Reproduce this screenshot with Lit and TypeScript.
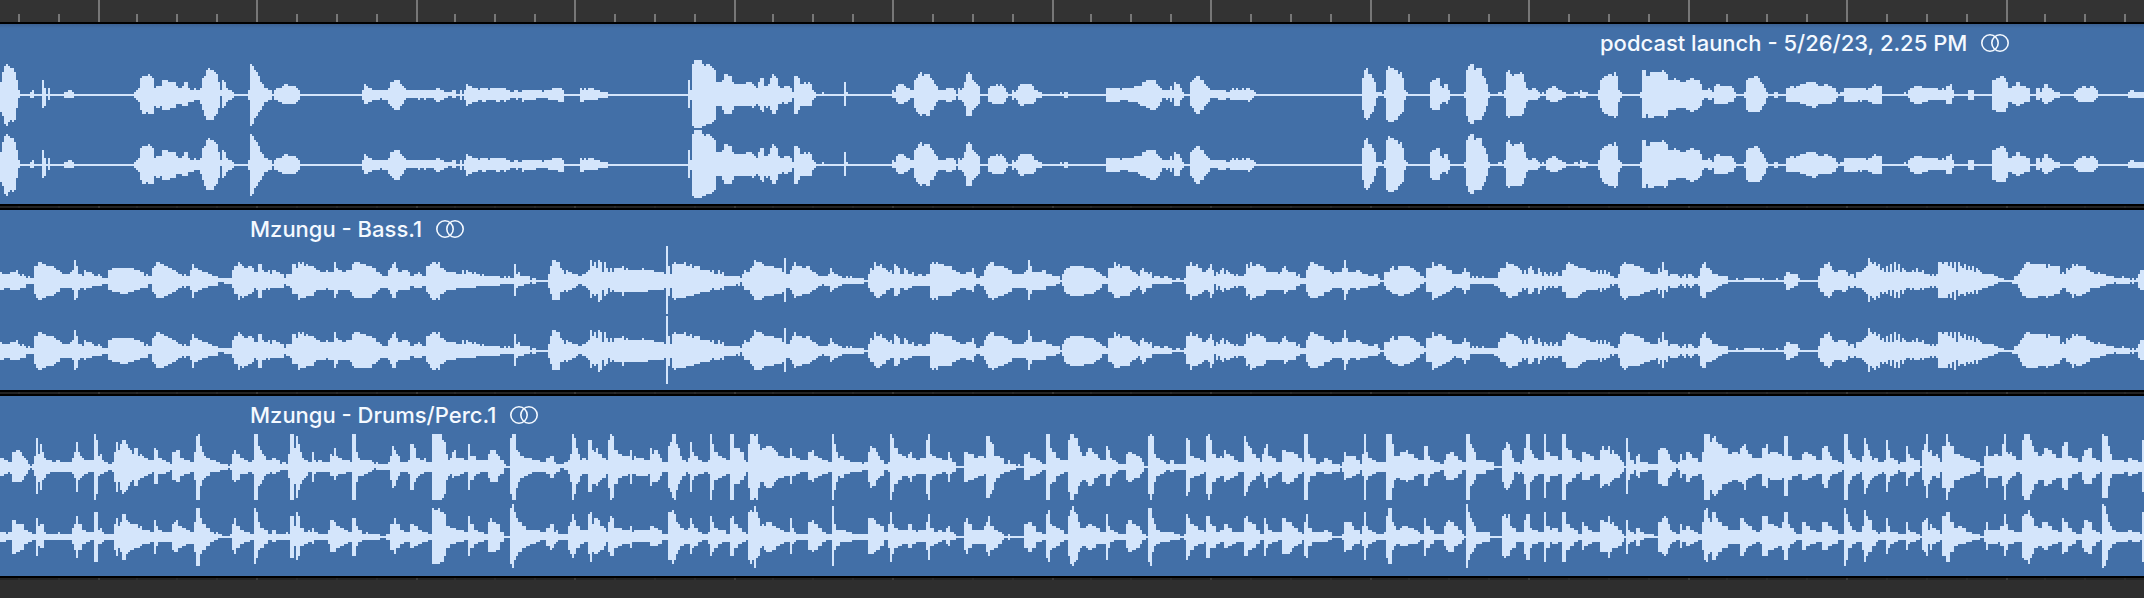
import { LitElement, html, svg, css } from "lit";
import { customElement, property } from "lit/decorators.js";

/** Timeline length at 1:1 zoom, in pixels. */
const TIMELINE = 2144;
/** Each envelope is stored in sections; a section covers this many peak columns. */
const SECTION_COLUMNS = 268;
/** Time units inside one section. */
const SECTION_UNITS = 1568;
const COLUMNS = TIMELINE / 2;
const LANE_ROWS = 35;
const MID = 17;

/*
 * Peak envelopes. An entry is time:above/below (below may be left out when both
 * sides are alike). A value holds until the next entry.
 */
const PODCAST = [
  `0:6/8 6:11/10 12:14 18:15 24:14/13 30:13/12 35:13 41:11/12 47:7/6 53:2/1 59:0 88:1 94:2/1 100:0 123:7/6
   129:3/5 135:0 140:3/2 146:0 187:1 199:2/1 211:1 217:0 393:1 399:2 404:3 410:8/7 416:9 428:9/8 434:10/9 440:9 445:8/9
   451:3/5 456:4/6 468:4/5 474:7 492:6/7 498:6 515:4/4 521:3/4 532:4/5 538:6/5 550:3 556:2/3 568:3/2 574:2
   586:3/4 591:8/7 597:9/10 603:12 609:13/12 615:12 627:11/10 633:10/9 638:6 644:2/0 649:7/6 655:6/5 661:3
   667:2 679:1 685:0 726:2 731:15 737:14/14 743:12/11 749:11/10 755:9/8 761:6/7 766:5/5 772:3 784:2 796:0
   802:2 808:3/2 814:3 825:4 831:5/4 843:4 866:3 872:2 878:0 1060:2 1065:5/4 1071:4 1077:3 1089:2 1112:2/1
   1118:2 1136:3/4 1142:6/5 1148:6 1154:7 1170:5 1176:4 1182:3/2 1188:2/1 1223:2 1229:2/1 1241:2 1247:2/1
   1270:2 1276:3 1287:2 1299:1 1311:1/0 1323:2/1 1334:0 1346:2 1352:0 1358:2 1364:5 1370:4 1381:3 1399:2 1405:3/2
   1411:3 1422:3/2 1428:2 1434:3/2 1452:3 1463:3/2 1475:3 1481:2 1492:1 1504:2/1 1510:2 1516:1 1527:2/3 1533:2`,
  `0:2/1 18:1 24:2/1 36:2 48:3/2 65:3 76:2/3 82:0 129:3 135:2/3 141:3/2 147:2 153:3/2 170:2 182:2/1 187:1 211:0
   445:7/6 451:2 457:15 462:17/16 486:15 492:14/15 498:15/14 509:14 515:13 521:12/12 527:6/5 544:7 550:10/9 562:9 574:6/7 579:5
   609:5 615:6/5 632:5/6 638:4/5 644:3/4 649:6/5 655:8/7 661:8 667:4/5 673:4/6 679:5 685:8/7 690:10/9 696:9 702:8/7
   708:4 714:3/4 720:3 726:4 737:4/3 743:3 749:1/1 755:9 767:8/7 772:5 784:6/5 790:5 796:6/5 802:5 807:2 813:1 819:0 837:1/0
   843:0 902:6/5 908:1/0 913:0 1041:2/1 1047:1 1053:4/3 1059:5/4 1076:4/3 1082:3 1088:3/2 1094:2/1 1106:7/6 1112:8 1117:10/9 1123:11/10
   1129:9 1135:10/9 1141:10 1152:8/7 1158:7 1164:5 1170:4/3 1176:2 1199:3/3 1217:3/2 1223:2 1229:0 1235:3/2 1241:2 1247:3 1253:6/5 1258:10
   1264:11/10 1270:10 1276:7 1282:6 1288:5 1293:4/4 1299:0 1323:3 1329:4/3 1335:4 1346:5/4 1352:4 1358:5/4 1364:4/4 1370:3 1376:1 1381:0
   1393:2/2 1399:1 1405:2 1411:4/4 1417:5 1428:5/4 1452:4/4 1458:2/3 1464:2/1 1470:1 1481:0 1534:1/0 1540:0 1546:1 1557:0`,
  `0:0 100:3 141:2/2 147:3/2 164:3 182:4/3 194:4 200:4/5 206:6/5 217:7/6 229:7 246:5/6 252:4/5 258:3 264:2/1 276:2/2 282:2/1 288:4/3
   294:2/1 299:6/5 305:5 316:3/2 322:1 328:0 346:6/5 352:7/6 358:8 364:9 375:7 387:5/5 393:4 399:3 404:2/1 428:2 452:1 463:2 469:3/2 475:2 481:3/2
   487:2 492:2 498:3/2 504:2 510:3/2 516:3 522:2 528:2/1 534:1/0 539:0 849:8/7 855:12/11 861:13/12 867:10/11 873:10/9 879:8/8 885:6/5 890:1 896:1/0 908:0 914:2/1
   920:12 926:14/13 932:13 943:12 955:10 961:11/9 967:8 972:2 978:1/0 984:0 1048:6 1053:7 1065:8/7 1077:4 1083:3 1089:5/3 1095:5/4 1101:2 1106:0 1147:1
   1153:12/10 1159:14/13 1165:15/14 1177:12 1182:13/12 1200:9/10 1206:8 1212:5/5 1218:1 1224:0 1247:1/0 1259:0 1265:2/1 1271:11/10 1276:12/11 1282:10 1288:9/10 1294:10
   1312:11/10 1318:10/9 1324:6 1330:3 1335:2 1347:3/2 1353:3/2 1359:2 1365:1 1370:0 1376:1/0 1382:0 1388:2 1394:3/2 1400:3 1405:4/3 1417:3 1423:2 1435:1 1447:0 1470:1/0
   1482:0 1487:2/1 1493:1 1505:1/0 1511:0 1540:2 1546:7/6 1552:8 1558:9`,
  `0:10/10 12:9/10 18:11 24:9/10 29:2/3 35:1 41:0 94:1 99:12/11 111:9 117:9/11 123:11 135:11/10 158:12/10 164:11 170:10 176:7/7 188:7 194:8/7 200:7/6 211:6 229:7 241:8 253:7
   264:7/6 270:5/5 276:2 281:2/1 293:3/2 299:2 305:1 310:4 316:5/4 328:4 352:4/3 363:3 369:1 375:0 399:1 404:7 410:8 428:9/8 439:8 445:6/7 451:5 457:3/4 463:1 468:0
   486:1 498:0 521:3 533:4/3 545:3 551:4/3 562:5/4 580:6/5 597:6 609:5/5 615:4 632:5/4 644:4/4 656:3 667:1 673:0 679:1/0 690:3 732:3/2 738:3 744:3/2 756:2 762:3 773:4 779:5/4 785:4
   802:0 867:1/0 873:0 879:2/1 885:3 896:4 920:3 937:3/2 960:3/2 966:2 978:3/2 984:2 990:4/4 1001:5/4 1007:2/1 1013:0 1054:2 1071:0 1124:7 1136:8 1148:9/8 1159:8 1165:6 1170:3 1182:4 1194:6/5
   1206:4/4 1218:4/3 1223:3 1235:0 1253:3/2 1265:1 1271:3 1277:5/4 1289:3 1300:2 1306:1 1312:1 1323:0 1364:1 1370:2 1376:3 1388:4/3 1400:3 1411:4/3 1423:3/2 1429:2/1 1435:0 1522:1 1528:2/1 1540:1`,
];

const BASS = [
  `0:4 6:3/4 12:3 29:4 47:5/4 53:3/4 59:2/3 65:3/3 70:2/3 76:1 82:2/1 88:1 100:7/6 106:7/8 111:9 123:8 135:7/7 147:7 158:6/6 164:5 176:4/3 182:3 205:4/3 211:5/4 217:10/9 222:7/8 228:3/4 234:3 240:2/3 246:5/4 252:4/3
   263:4/3 269:3/2 275:2 287:3/2 293:2/2 298:1 316:5/4 328:6/5 352:6 375:6/5 393:5/4 410:4/3 422:2/3 428:3 434:2/1 445:6/5 451:7/6 457:9/8 468:8/8 480:7/7 492:6/6 504:5/5 515:4 521:3/3 532:2/2 538:3 544:2 556:5/4 562:8 568:6/5 580:5/4 591:4/3 609:3/2 621:2/2
   638:1/0 644:1/0 656:1 679:5/3 685:7/6 697:9 703:8/7 709:7/8 715:6/7 726:7/6 738:6/5 744:4/3 750:4 755:8 767:5/4 773:4 779:4/3 785:5/4 791:3 797:5/3 808:4/3 820:3/3 832:1 838:3/2 850:3 855:8/6 867:6 873:9 879:8 885:9/8 890:7/8 896:8/7 902:7 920:6/5 926:5/4 937:4
   955:5/3 961:4 978:9/8 984:6 990:5/4 1002:4/4 1014:5/4 1025:5 1031:8/7 1037:9/8 1054:8 1072:7/8 1089:6/6 1101:4/5 1107:4/4 1113:3 1119:2/3 1136:5/4 1142:6 1148:8 1154:9/8 1160:6/5 1165:4 1177:5/4 1195:4 1201:2/2 1212:3 1224:4/3 1230:3 1236:2/2 1247:7/5 1253:7/6 1259:8
   1265:9 1276:8 1282:9 1288:6/6 1300:5/5 1306:4/4 1335:3/3 1352:5/3 1358:3 1364:5/3 1370:4/3 1376:4/3 1381:3 1387:4/3 1393:3/2 1399:3/2 1405:2 1411:3/2 1417:2 1463:1 1475:2/1 1481:1 1487:2/1 1493:1 1504:8/7 1510:3/3 1516:4/2 1522:2/2 1533:2/1 1550:0 1556:1`,
  `0:0 36:3 42:7/6 47:10/9 59:9 70:6/5 76:5/5 82:3/4 88:5 94:4/4 106:3/3 117:3/2 123:2/1 135:3/2 147:4/3 153:5/4 159:10/8 165:7/6 170:9/7 176:6 182:10 188:9 194:4 200:9/7 206:6 212:4/3 217:6/5 223:4 229:6/5 252:7 258:5 264:6/5 270:5 311:6/5 317:5
   328:5/4 340:5/4 346:4 375:3 381:17/16 387:7/7 393:3 399:8 405:9 411:8 434:9/8 440:7 452:8/7 458:6/7 463:7/6 481:5/5 510:4/4 516:5/3 522:3/4 534:5/4 540:3 545:4/4 551:2/2 587:2/1 592:2 598:1/0 604:3/2 610:5/4 616:4 627:6/6 633:7/7 638:10/9 644:9 662:8/8 668:7/7 697:6/6 720:4/5 726:11/10
   732:3 744:5/4 750:7/6 756:9/8 762:7 779:6/6 791:7/6 803:5/5 809:4 821:3/3 826:2/2 838:2/1 844:2 856:3/2 861:6/5 867:4/4 873:3/3 885:2/2 896:1/1 908:2/1 914:1 920:2/1 926:1 961:0 973:3/3 978:6/5 984:5 990:9/7 996:7/8 1008:8/7 1013:6/6 1025:5/4 1031:4 1037:5/3 1043:3 1048:8/7 1054:7 1060:6
   1066:3 1078:6/4 1084:5/4 1089:3 1101:4/2 1107:2 1119:3/2 1131:2 1142:3/2 1154:8 1160:9 1166:8/8 1172:9 1177:8/7 1195:7 1218:5/5 1230:4/4 1242:3 1259:4 1277:6/5 1283:3/2 1289:1 1300:2 1312:5/4 1318:7/6 1324:8/8 1329:9/8 1335:9 1341:7/8 1353:7/7 1370:6 1382:5/5 1394:3/3 1417:3 1429:4/3
   1435:5/4 1441:10/9 1447:7/6 1452:4 1464:4 1482:5/4 1493:3/2 1505:3/2 1511:2 1523:2/1 1534:0 1540:3/2 1546:5 1552:6 1558:6/6 1563:7`,
  `0:7 35:6/6 65:5/5 70:4 82:3/3 88:2/1 100:1 106:6/5 118:6 124:9/8 130:7/8 136:8 141:6/7 147:7 170:5/5 176:4/4 188:3 194:2 200:5/4 206:6/6 212:4/5 218:4/3 223:3 229:4/3 235:1 241:2/1 253:2/1 258:1 270:2/1 282:1/1 293:0 305:1/0 317:0 329:1/1 334:7/6 346:9 352:7/7 364:8/7 370:6 382:4/5 387:4
   393:5/4 399:6/5 405:8 411:5/6 417:2/1 423:4 429:3/2 435:5/4 440:6/5 446:3 452:5/4 458:4 463:3 475:2/2 481:3 487:2 504:3 510:8/7 516:6 522:9 528:7/8 540:8/7 552:7 563:6 569:4 604:3/4 610:4 616:6/4 622:7/6 628:5/5 634:4 657:2/2 663:3/2 669:1 687:5 693:7/7 698:9/8 710:8/8 722:7/7 740:5/5 757:4/4
   763:3 769:4/3 792:6/4 798:10/9 804:6 810:4 816:4/3 828:5/4 840:4/3 851:3/3 863:2/2 869:2 881:3/2 893:1 902:0 914:4/2 920:4 931:6/5 937:7/6 943:5/6 955:7 972:7/6 990:6/5 1002:5/4 1008:4/3 1020:2/1 1031:1/0 1037:6/5 1054:9 1060:7/8 1072:8/7 1084:7/6 1095:5/5 1107:5/4 1113:3 1119:3/2 1125:3 1142:4/4
   1148:6 1154:4/4 1166:1 1172:2/1 1178:1 1184:2/1 1189:1 1201:2/1 1207:1 1236:1/2 1248:4/3 1253:6/5 1271:9/7 1277:8/8 1289:8/7 1294:7 1306:6/5 1312:5 1318:3 1324:5/4 1330:3 1335:6 1341:7/6 1347:5 1353:3 1365:6 1371:4 1377:2/2 1382:4 1388:3 1394:2 1400:4/3 1406:2 1412:3 1417:4/3 1423:2 1433:5/5 1445:8 1452:9/8 1458:8 1470:7/8 1482:6/7 1487:6 1493:6/5
   1505:5/4 1517:4 1534:5/4 1540:3 1546:5 1552:3 1557:5/4 1563:3`,
  `0:4/3 6:2/1 12:2 18:1 29:3 35:7/7 41:8 47:9 53:8/8 59:8/7 76:7/7 94:6 105:4/5 123:3/4 141:3 147:6 153:4/4 158:9/8 164:5/4 170:5 176:2/2 182:3 205:2/2 211:1 217:2/2 223:3 229:1 235:3/2 241:3 247:2 253:1 264:2 270:6/7 276:8 282:9/8 288:6/5 294:6/5 299:5 305:3/4 317:3 323:2/2 334:2/1 352:0 375:1/0
   381:0 399:1/0 446:0 451:1/0 457:0 492:1/0 498:0 515:2/1 521:4 533:3/3 545:3/2 556:1/0 562:0 615:2/3 621:6/5 633:8/7 645:9/8 650:7/7 656:5/5 662:4/4 674:5/4 685:5 697:4 703:2 709:3 721:1/2 727:4/3 744:5/4 750:6/5 756:7/6 762:11/10 768:9/7 774:8 780:9 786:7 791:8 797:5 803:6/6 809:4/5 815:7/6 821:4 827:8/7 833:4 838:9/8
   844:5 850:8 856:4 862:6 868:5/4 874:4/3 885:4 891:5/3 897:4 903:6/4 909:4/4 915:4/3 921:5/4 926:3 938:3/3 944:2 950:3 956:2 961:3 966:9/8 978:8 984:9/8 996:7/6 1001:9/8 1007:6/5 1013:9 1019:4 1025:9/7 1031:7/6 1037:6 1043:8/7 1048:5 1054:7/6 1060:5 1066:7/6 1072:4/4 1078:6 1084:5/4 1089:4/4 1095:3/3 1113:3/2 1130:2/1 1142:1/0 1158:0 1182:0/1
   1188:2/1 1200:3/3 1206:5 1212:6/7 1218:8/7 1224:9/8 1235:8 1258:8/7 1282:6/8 1288:8/7 1294:7 1305:7/6 1323:3/4 1329:4/3 1335:3 1341:6/5 1347:5 1353:6 1358:8 1364:7/6 1370:8/7 1376:7 1388:7/6 1400:5/5 1411:4/3 1423:3/3 1435:4/3 1441:3/2 1458:2/1 1481:1/0 1487:1 1505:2/1 1510:1 1528:0 1534:1 1540:0 1546:1/0 1551:3 1557:5/4`,
];

const DRUMS_LEFT = [
  `0:4 12:3/3 24:2 30:2/3 35:7 47:8/7 59:7 65:5/6 70:4/4 76:3 82:1 88:0 94:1 100:5/4 106:14/13 112:6/7 117:11 123:7/6 129:4/5 135:3/3 147:3/2 153:2/2 164:3/2 176:2 211:4/3 217:7/5 222:12 228:7/6 234:5 240:4 246:3/3 258:3/2 275:16 281:13 287:5/4 293:6/3 299:3 305:2/2 316:1 328:2 334:7 340:12 346:8/7 352:11 357:13 363:13/12 369:11 375:9 381:8/7 387:6
   393:9 405:5/6 410:6/5 416:5/5 422:4 433:3/3 445:3/2 451:9/8 457:8 463:4/3 475:3 486:2 498:1/1 504:7/6 515:8/7 527:4 538:3/3 556:2 568:7/6 574:15/16 580:16 585:10/9 591:7/6 597:5 603:4 615:3/2 632:2/2 644:1 667:0 674:1 679:6 685:8/7 691:6/6 703:4/3 715:3/3 726:2 732:2 738:3 744:16 755:10/9 761:8 767:6/6 773:5/4 779:3/3
   791:3/2 797:4/3 808:3/2 820:1 826:2/1 838:1 843:6/5 849:16 861:9/8 867:15 873:11 879:7/8 885:4/6 891:3/5 897:3/4 903:2 914:7 920:3/3 926:2 932:3/2 944:2 961:2/2 967:6/4 972:5/4 978:9/6 984:5/4 990:4/3 1002:3/3 1014:3/2 1025:2 1031:16 1042:7 1048:4 1054:3/4 1066:3/3 1078:3/2 1089:2/1 1095:1/0 1101:2/1 1107:1 1136:2/1 1142:5/6 1148:10 1154:8/9 1160:6 1166:5/4 1172:2/2 1195:3
   1201:11 1212:9/7 1218:4/5 1224:4/4 1230:3/3 1242:4/2 1247:2 1265:16 1294:13/15 1300:12/13 1306:6 1312:3/4 1318:4/3 1323:7/5 1329:8/4 1335:4 1346:4/3 1358:3/2 1370:11 1376:5/6 1387:5/4 1393:3/3 1405:3/2 1428:6/5 1434:8/7 1452:6/7 1457:5/4 1463:3 1475:1/0 1481:0 1493:14/13 1498:16 1510:8/10 1516:7/7 1522:5 1533:4/4 1545:4/3 1557:3/2`,
  `0:3/2 12:2 30:4/3 42:5 53:2/3 59:1/2 70:1/0 82:2/1 94:3 100:6/7 106:16 112:14/13 117:9/8 123:6/7 129:3/4 135:4/3 147:3 153:13/12 164:8/8 170:7/8 176:9 182:6/7 188:6 194:4/5 206:3/3 212:13/10 217:16 223:15 229:8 240:6/5 252:5/4 270:5/3 276:8 282:3 288:5/3 294:4/4 317:3/4 329:3 334:9 340:6/7 346:8/7 358:6 364:4 370:2 381:2/2 387:10 393:12 399:16/15 405:16 410:11 416:9/8 422:5/6 428:3/4
   440:2 446:4/3 452:12 457:7/6 463:5/4 475:3/3 487:2/3 493:2/2 505:3 510:16 516:11 522:7/6 534:5/5 545:4/4 557:3/3 563:3 569:16 580:9/8 586:9/8 598:7/6 609:3/4 615:2 621:11/10 627:16 639:15 645:16 650:11/10 656:8/7 662:9/7 668:9 674:10 691:9 697:8/7 703:7/6 709:5/5 727:4 744:9/8 750:5/4 762:4/3 773:3/2 791:3/2 797:7/6 809:8/7 815:5 827:4/4 838:3/3 856:2 867:16
   873:11 879:7 885:4/4 891:5 903:3/3 920:2/2 955:1/1 961:2/1 973:7 978:10/10 984:9 996:7/6 1002:5 1008:3/4 1020:1/1 1031:2 1037:16 1043:14/12 1049:9/8 1060:6/6 1072:5/4 1084:4 1090:6/5 1095:7 1101:4/4 1113:3/3 1125:4/3 1142:13/13 1148:16 1154:6 1160:5/4 1172:4/3 1189:3/2 1201:3 1207:7 1213:4/3 1219:2 1230:0 1254:7 1265:6/6 1283:4/5 1295:5/4 1312:4/3 1318:15 1329:12/13 1335:11 1341:5/7
   1347:5/5 1358:4/3 1370:1/2 1382:3/2 1388:1 1405:0/0 1411:1/0 1417:0 1429:6 1441:7/6 1447:4 1464:3/3 1475:2/2 1482:1 1493:16 1505:9/8 1511:7 1523:4/4 1534:3/3 1546:3/2 1557:13/12 1563:16`,
  `0:16 6:14/13 18:10/9 24:7/7 30:5/6 42:7 48:9 59:7/8 65:6/5 76:4/4 82:3/3 100:10/9 106:8/9 112:4/5 118:3/3 130:2/2 136:1 159:6 165:7 177:6 182:6/5 188:5 200:4/3 206:2/2 212:0 223:15/13 229:16 235:15/13 241:6/7 247:4/4 259:3/3 270:2/2 276:1 288:3/2 300:1/1 329:1 334:14 340:13/12 346:5 358:4/4 376:3/3 388:2 394:15/13 400:16 405:13 411:6/7 423:4/5 435:5/4 441:4 446:8/7 452:6/6 464:5/5 475:3/4 487:2
   504:15/14 510:12 516:10/9 522:9/7 528:6/6 540:4/4 551:2/2 557:6/3 563:9/7 569:11/10 575:5/5 587:4/4 598:2/3 604:2 614:8/7 628:7/8 640:7 652:6/5 664:4/3 673:2/2 680:16 691:6/7 697:4/4 715:1/2 727:2/2 739:4/3 750:3/3 762:1/2 785:0/0 791:2/2 797:7/6 803:5 821:5/4 833:3/3 845:1/1 850:6/4 856:16 862:7/6 868:4/4 880:3/3 892:2/2 910:2 916:13/10 920:16 937:11/10 943:5/6 949:5 961:7/6
   978:8/7 984:6 1002:4/4 1014:3/3 1025:3 1031:10/9 1043:5 1049:3/3 1060:2/2 1078:1/1 1090:3/4 1096:6 1108:7/6 1119:5/5 1131:3/3 1143:2/1 1154:16 1165:11/9 1171:9/8 1177:7/6 1183:3/3 1201:3/3 1212:2/1 1236:0/0 1259:8/7 1265:9/10 1271:12/11 1277:11/10 1283:8 1289:4/6 1295:2/2 1306:2/3 1312:1/2 1318:3 1324:9/8 1330:16 1341:8/7 1347:6/6 1353:4/4 1365:3/3 1382:16/15 1388:7 1400:5/4 1423:3/3
   1435:16 1447:9/8 1452:8/7 1464:4/5 1475:3/3 1487:2 1493:7/6 1505:6/6 1517:5/4 1529:3/3 1546:8/10 1552:10/9 1558:8`,
  `0:10/9 6:6/7 12:8/6 18:6/5 29:5/5 35:3/3 41:2 47:0 53:14/13 59:7/6 65:3/3 76:1/1 82:5/4 88:6/5 94:2/2 106:2 117:1/1 129:1 147:8 153:9/8 159:9 170:8/9 176:6/5 182:3/4 188:2 200:1/0 205:2/1 211:6/5 217:3 229:7 241:6/5 247:4/4 264:2/3 276:7/6 282:16 299:12/11 305:14/13 311:15/14 317:12/13 323:11 335:9/8 352:6/7 364:7/6 381:6/7 387:9/7 393:10/8 399:11 405:8/6 411:6/5 422:4/4 434:4/3 452:9
   463:11/10 469:6/5 475:7/6 498:6/6 510:5 516:15/14 527:5/6 539:3/4 557:3/3 569:6/6 574:7/6 586:6/5 598:5/4 610:3/3 627:9/8 633:10 645:7/6 651:5/4 657:3/3 674:2/2 685:1 691:16 703:8 709:6/6 715:4/4 726:3/3 738:2/2 744:5/6 750:14/13 756:11/10 762:8/8 768:5/6 774:3/5 780:4 791:2/3 803:2/2 809:3 814:13/12 820:8/7 826:4 838:3/3 850:1/1 856:2/2 873:10/9 879:6/5 885:4/4 896:3/2 914:0/0
   920:8/6 926:11/9 932:16/15 937:7/8 943:8/6 949:5/4 961:6/5 967:4/5 973:2 978:10 990:16 996:12 1002:10 1013:6 1031:5/5 1043:4/4 1060:3/3 1078:2/2 1089:0/0 1101:5/4 1107:10/10 1113:5/5 1124:5/5 1130:6/5 1142:5/4 1154:11/9 1160:16 1165:7/8 1171:6/6 1177:7/5 1183:5/4 1195:3/2 1206:3 1212:13/14 1218:16 1236:13 1241:10/11 1247:7/8 1259:5/6 1271:6 1277:9 1288:8 1300:6/6 1312:4/5 1329:10/10 1335:12/11
   1347:5/5 1358:4/3 1376:2/2 1388:5/6 1394:8/8 1405:9/8 1417:4/5 1429:3/3 1440:2 1446:16/15 1452:15 1464:10/9 1470:6/5 1476:3/3 1511:2/2 1523:4/4 1534:3/3 1551:2 1563:13/12`,
];

const DRUMS_RIGHT = [
  `0:2 18:1 24:2/1 35:8 47:6/7 59:6/6 70:3/3 82:2/2 94:1 106:9 112:5/4 117:6/5 129:2/1 135:1 170:2/1 176:1 211:4/3 217:6 222:10 228:6 240:3/3 252:2/2 263:2/1 275:12 287:3 293:4/3 299:2/2 305:1 334:6 340:9 346:5 352:7 358:11 369:8 375:7 381:6/6 393:6/5 405:4/5 410:5/4 416:3 428:3/3 439:2/2 451:8 457:5/4 463:3/2 475:2 504:6 510:7 515:8/7 521:5 533:4/4 544:3/3 556:2/3 568:7 574:14 585:9/8 591:6 603:4/4
   615:2/2 626:1/1 632:2/1 638:1/0 650:0 674:1/0 679:6 685:9/8 691:5 703:3/3 715:2/2 732:1 744:14/13 750:12/10 755:7/6 761:4/5 773:3/3 785:1/1 797:3/2 808:1 838:2/1 843:1 849:10 861:5/4 867:12/11 873:10/9 879:4/4 891:2/3 903:3/2 909:2 914:4/3 920:2/1 932:1 944:1 961:3 967:8/7 978:7/7 984:5/5 996:4/4 1008:3/3 1020:2/2 1031:9 1042:5/4 1048:3/2 1060:1/1 1072:2/1 1078:1 1113:0/0 1130:1 1142:6
   1154:9/8 1160:6/5 1172:3/3 1183:2/2 1201:6/5 1212:5/4 1224:3/3 1236:2/2 1253:1 1265:14/13 1271:13 1282:14/13 1288:12 1300:11/9 1306:5 1318:4/3 1335:3/2 1358:2/1 1370:10/9 1376:6/5 1387:3/3 1399:2/2 1417:1 1428:7 1434:9/7 1440:7 1452:6/6 1463:2/2 1475:0 1492:14/13 1498:16/15 1504:12/11 1510:9 1516:7/7 1527:5/5 1539:3/4 1551:3/3`,
  `0:3/2 12:2/1 30:4/4 42:6 48:6/5 53:2/3 59:3/2 65:1 94:5/6 100:7/8 106:11/10 112:8 117:5/5 129:3/3 141:3/2 147:3/2 153:11/8 159:12 165:6/7 170:9/8 182:8/7 188:5/6 200:4/4 206:2 212:7 217:10/9 223:9 229:4/5 241:4/4 252:3/3 276:5 282:2 288:3/2 311:3/2 334:5/4 346:4 358:3/3 370:1 387:12/11 399:13/13 405:11 410:7/8 416:6/6 422:4/4 434:3/3 446:4/3 452:9/8 457:6/5 463:4/4 475:2/2 487:1 505:2/3 510:10/9 516:7 522:4/5 534:3/3 545:3/2 557:1/2
   569:9 575:10/9 580:6/5 592:4/3 604:2/2 615:1 621:12/11 627:13 633:12/11 639:15 645:12/10 650:9 656:5 662:6/4 668:5/6 674:7 691:5/6 703:4/4 715:3/3 727:2 744:9/8 750:4/3 756:2 762:1 797:7/6 809:8/7 815:6/6 827:4/4 838:2/2 850:1 867:15/14 873:6/6 879:3/4 891:3/2 908:2/2 926:1 973:9/8 990:8/7 996:6/6 1008:5/4 1020:2/1 1031:6/5 1037:12 1043:6/8 1049:4/5 1060:3/4 1072:3/3 1090:6/5 1101:3/3
   1113:2/2 1119:3/2 1142:7/6 1148:11 1154:4/4 1166:2/3 1178:3/2 1189:2/1 1201:4/3 1207:5/4 1213:2/1 1225:1 1230:0 1254:7/6 1260:9/8 1265:6/5 1277:3/3 1312:5/3 1318:7/7 1324:10/9 1329:5/6 1341:3/5 1353:2/3 1364:1/1 1370:0 1382:1 1388:0 1429:6/5 1441:7/7 1452:5/5 1464:2/2 1482:1 1493:11/10 1499:13/12 1505:6/6 1511:5/5 1523:4/4 1534:3/2 1546:1 1557:10/9 1563:13`,
  `0:15/14 6:12 12:11 18:7/7 24:4/5 30:4/4 42:5/5 48:6/6 59:5 71:4/3 82:2/3 100:11 106:5/5 112:3/2 124:2/1 136:1 159:6/5 165:8/7 177:6 188:5/5 200:3/3 206:1 218:0 223:14/12 229:14 235:9/7 241:6/4 247:3/3 259:2/2 288:2/1 300:1 318:0 329:1/1 334:11 340:9 346:6/6 358:5/4 370:3/3 388:2 394:10 405:6/5 411:5/5 423:2/3 435:3/2 446:6/5 458:4/4 470:2/3 481:2/2 504:9 510:10/9 516:7/6 528:6/5 540:3/3 551:1
   563:9 569:6/5 575:3/3 587:2/2 598:2 604:2/1 614:9/8 628:7/8 640:7 646:5/5 652:4/4 664:2/3 673:1 680:7/9 685:11/10 691:4/4 703:2/2 727:2/2 739:3/2 750:2/1 762:0 791:1 797:7 803:7/6 821:5/4 827:3/3 845:1 850:5/4 856:12/11 862:5 868:3/3 880:2/2 892:1 910:2/1 916:7/6 920:10 926:14/13 937:7/6 943:5/4 949:3/3 961:4 967:5/4 985:4/3 1002:3/3 1014:2/2 1019:1 1031:9 1037:5/5 1049:3/3 1060:1/1
   1090:5/4 1096:7/6 1102:8/7 1108:7 1119:5/4 1131:3/3 1143:1/1 1148:0 1154:16/15 1160:12/11 1165:9/8 1171:7/7 1177:5 1183:2/3 1201:2/2 1212:2 1224:0 1259:10/9 1265:11/10 1271:9 1277:11/9 1283:5/6 1289:4/5 1301:2/2 1318:2 1324:8/8 1330:11 1341:4/5 1347:3/3 1365:2/2 1382:12 1388:5/5 1400:3/2 1406:4/3 1423:2/2 1435:12 1447:6/6 1458:4/4 1470:3/2 1482:1/1 1493:7/6 1499:5/4 1511:3/3 1523:2/2 1546:8/7 1558:7`,
  `0:10 6:6/7 12:7/5 18:5 29:3/4 41:1/2 47:0 53:8 59:3/3 65:2/2 76:1 82:4 94:2/1 106:1/0 135:0 147:7 159:9/8 165:10/9 170:9/8 176:6/5 182:3/3 188:2/2 200:1 211:6/5 217:3/2 229:5/4 241:3/3 253:2/2 264:1 276:7/6 282:13/11 288:14/12 293:9/8 299:7 305:12/11 317:9/9 323:7/7 335:5/5 352:3/3 387:9 399:7 405:6/5 411:5/4 422:3/3 434:2/2 446:3 452:10/9 469:6/6 486:5/5 498:4/4 510:7/6 516:12/11 527:6/5 533:4/3 545:2/2 551:1
   569:7/6 580:5/4 592:3/3 610:2/2 627:7/6 645:5/4 657:3/3 674:1/1 691:14 697:11 703:7/5 709:5 715:3/3 726:2/2 744:5/6 750:13/12 756:10/9 762:8/7 774:3/4 785:2/2 791:1 797:2/1 814:9/8 820:5/5 826:2/3 838:2/2 850:1 873:7/6 879:3/3 885:2/2 902:1 914:0 920:7/6 926:8/7 932:9 937:3 943:6 949:4/3 961:3/2 973:1 978:10/9 990:12 1002:7/7 1013:4/4 1025:5/3 1037:4/3 1049:2/2 1066:1/1 1078:1 1089:0 1101:3/2
   1107:7/6 1113:3/3 1142:3/2 1148:5/4 1160:11/9 1165:6/6 1171:3/3 1189:2/2 1206:2 1212:10 1218:11 1230:13 1236:10/10 1241:9/8 1247:5/5 1259:4/4 1271:7/5 1277:7/6 1288:5/4 1300:3/3 1317:2/2 1329:9/8 1335:7/7 1347:4/4 1358:2/3 1370:1 1388:4/5 1394:8/7 1405:7/8 1417:3/4 1429:2/2 1440:1 1446:16/15 1452:15/14 1458:11 1464:7/6 1470:5/5 1476:3/3 1487:2/2 1523:3/1 1534:2/2 1557:1 1563:12`,
];

function envelopePath(sections: string[]): string {
  const up = new Array<number>(COLUMNS).fill(0);
  const down = new Array<number>(COLUMNS).fill(0);
  sections.forEach((text, index) => {
    const peaks = text.trim().split(/\s+/).map((entry) => {
      const [time, level] = entry.split(":");
      const [above, below] = level.split("/").map(Number);
      return {
        column: Math.round((Number(time) / SECTION_UNITS) * SECTION_COLUMNS),
        above,
        below: below ?? above,
      };
    });
    peaks.forEach((peak, i) => {
      const end = peaks[i + 1]?.column ?? SECTION_COLUMNS;
      for (let c = peak.column; c < end; c++) {
        up[index * SECTION_COLUMNS + c] = peak.above;
        down[index * SECTION_COLUMNS + c] = peak.below;
      }
    });
  });
  let path = `M0 ${MID}`;
  for (let c = 0; c < COLUMNS; c++) path += `V${MID - up[c]}H${c + 1}`;
  for (let c = COLUMNS - 1; c >= 0; c--) path += `V${MID + 1 + down[c]}H${c}`;
  return path + "Z";
}

interface Region {
  name: string;
  labelAt: number;
  channels: string[][];
}

const REGIONS: Region[] = [
  { name: "podcast launch - 5/26/23, 2.25 PM", labelAt: 1600, channels: [PODCAST, PODCAST] },
  { name: "Mzungu - Bass.1", labelAt: 250, channels: [BASS, BASS] },
  { name: "Mzungu - Drums/Perc.1", labelAt: 250, channels: [DRUMS_LEFT, DRUMS_RIGHT] },
];

interface Tick {
  x: number;
  major: boolean;
}

const TICKS: Tick[] = Array.from({ length: 54 }, (_, i) => {
  const beat = i - 2;
  return { x: 2 * Math.floor((98 + beat * 39.75) / 2), major: beat % 4 === 0 };
});

@customElement("time-ruler")
class TimeRuler extends LitElement {
  static styles = css`
    :host {
      display: block;
      height: 22px;
      background: #333333;
    }
    .ticks {
      display: block;
      width: 100%;
      height: 100%;
    }
    .tick {
      fill: #777777;
    }
  `;

  render() {
    return html`<svg class="ticks" viewBox="0 0 ${TIMELINE} 22" preserveAspectRatio="none" shape-rendering="crispEdges" aria-hidden="true">
      ${TICKS.map((t) => svg`<rect class="tick" x=${t.x} y=${t.major ? 0 : 14} width="2" height=${t.major ? 22 : 8}></rect>`)}
    </svg>`;
  }
}

@customElement("grid-gap")
class GridGap extends LitElement {
  static styles = css`
    :host {
      display: block;
      height: 2px;
      background: #232323;
    }
    .ticks {
      display: block;
      width: 100%;
      height: 100%;
    }
    .major {
      fill: #3a3a3a;
    }
    .minor {
      fill: #2b2b2b;
    }
  `;

  render() {
    return html`<svg class="ticks" viewBox="0 0 ${TIMELINE} 2" preserveAspectRatio="none" shape-rendering="crispEdges" aria-hidden="true">
      ${TICKS.map((t) => svg`<rect class=${t.major ? "major" : "minor"} x=${t.x} y="0" width="2" height="2"></rect>`)}
    </svg>`;
  }
}

@customElement("audio-region")
class AudioRegion extends LitElement {
  @property({ attribute: false }) region!: Region;

  static styles = css`
    :host {
      display: block;
      border-top: 2px solid #000000;
      border-bottom: 2px solid #000000;
      background: #426fa7;
      color: #f4f9ff;
    }
    .region {
      display: flex;
      flex-direction: column;
      padding-bottom: 4px;
    }
    .header {
      box-sizing: border-box;
      display: flex;
      align-items: center;
      gap: 14px;
      height: 36px;
      padding-top: 2px;
      white-space: nowrap;
    }
    .name {
      margin: 0;
      font: 500 22px/28px Inter, "Liberation Sans", sans-serif;
    }
    .stereo {
      flex: none;
      width: 28px;
      height: 18px;
    }
    .lane {
      display: block;
      width: 100%;
      height: 70px;
      fill: #d4e5fb;
    }
  `;

  render() {
    const { name, labelAt, channels } = this.region;
    return html`<section class="region" aria-label=${name}>
      <header class="header" style="padding-left: ${(labelAt / TIMELINE) * 100}%">
        <h2 class="name">${name}</h2>
        <svg class="stereo" viewBox="0 0 28 18" fill="none" stroke="currentColor" stroke-width="1.6" role="img" aria-label="Stereo">
          <circle cx="9" cy="9" r="8.2"></circle>
          <circle cx="19" cy="9" r="8.2"></circle>
        </svg>
      </header>
      ${channels.map(
        (channel) => html`<svg class="lane" viewBox="0 0 ${COLUMNS} ${LANE_ROWS}" preserveAspectRatio="none" shape-rendering="crispEdges" aria-hidden="true">
          <path d=${envelopePath(channel)}></path>
        </svg>`,
      )}
    </section>`;
  }
}

@customElement("app-root")
class AppRoot extends LitElement {
  static styles = css`
    :host {
      display: flex;
      flex-direction: column;
      min-height: 100vh;
      overflow: hidden;
      background: #2e2e2e;
    }
    .first {
      background: linear-gradient(#3b6091, #426fa7 4px);
    }
  `;

  render() {
    return html`
      <time-ruler></time-ruler>
      ${REGIONS.map(
        (region, i) => html`<audio-region class=${i === 0 ? "first" : ""} .region=${region}></audio-region>
          <grid-gap></grid-gap>`,
      )}
    `;
  }
}
